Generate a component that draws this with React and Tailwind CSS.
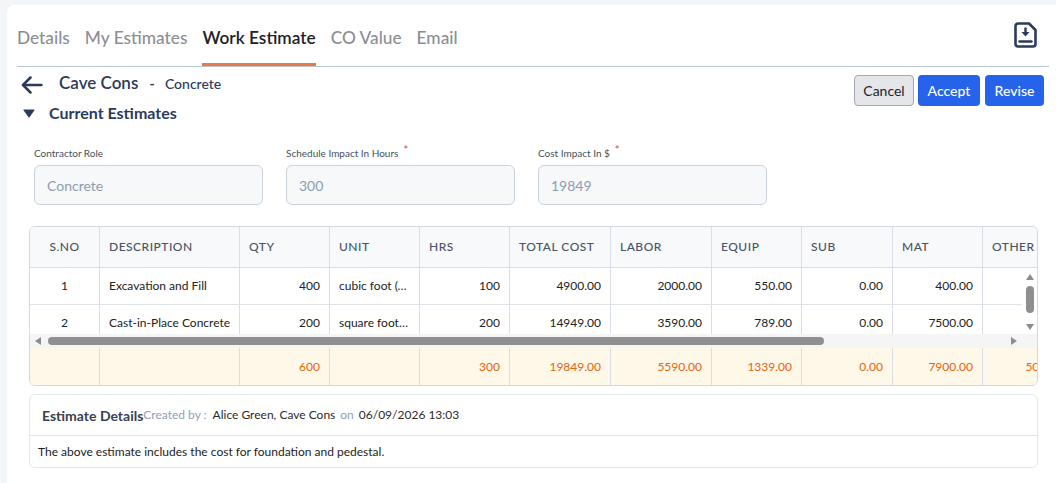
import React from "react";
import { clsx } from "clsx";

const tabs = ["Details", "My Estimates", "Work Estimate", "CO Value", "Email"];

const columns = [
  { key: "sno", label: "S.NO", w: "w-[70px]", head: "justify-center", body: "justify-center" },
  { key: "desc", label: "DESCRIPTION", w: "w-[140px]", head: "justify-start", body: "justify-start pr-[3px]" },
  { key: "qty", label: "QTY", w: "w-[90px]", head: "justify-start", body: "justify-end" },
  { key: "unit", label: "UNIT", w: "w-[90px]", head: "justify-start", body: "justify-start" },
  { key: "hrs", label: "HRS", w: "w-[90px]", head: "justify-start", body: "justify-end" },
  { key: "total", label: "TOTAL COST", w: "w-[101px]", head: "justify-start", body: "justify-end" },
  { key: "labor", label: "LABOR", w: "w-[101px]", head: "justify-start", body: "justify-end" },
  { key: "equip", label: "EQUIP", w: "w-[90px]", head: "justify-start", body: "justify-end" },
  { key: "sub", label: "SUB", w: "w-[91px]", head: "justify-start", body: "justify-end" },
  { key: "mat", label: "MAT", w: "w-[90px]", head: "justify-start", body: "justify-end" },
  { key: "other", label: "OTHER", w: "w-[97px]", head: "justify-start", body: "justify-end" },
  { key: "remarks", label: "REMARKS", w: "w-[180px]", head: "justify-start", body: "justify-start" },
];

const rows = [
  { sno: 1, desc: "Excavation and Fill", qty: 400, unit: "cubic foot (cu ft)", hrs: 100, total: "4900.00", labor: "2000.00", equip: "550.00", sub: "0.00", mat: "400.00", other: "1950.00", remarks: "" },
  { sno: 2, desc: "Cast-in-Place Concrete", qty: 200, unit: "square foot (sq ft)", hrs: 200, total: "14949.00", labor: "3590.00", equip: "789.00", sub: "0.00", mat: "7500.00", other: "3070.00", remarks: "" },
];

const totals = { sno: "", desc: "", qty: 600, unit: "", hrs: 300, total: "19849.00", labor: "5590.00", equip: "1339.00", sub: "0.00", mat: "7900.00", other: "5020.00", remarks: "" };

const DownloadIcon = () => (
  <svg width="23" height="26" viewBox="0 0 23 26" fill="none" stroke="#2c3a5c" strokeLinecap="round" strokeLinejoin="round">
    <path d="M4 1.5H15L21.5 8V22a2.5 2.5 0 0 1-2.5 2.5H4A2.5 2.5 0 0 1 1.5 22V4A2.5 2.5 0 0 1 4 1.5Z" strokeWidth="2.6" />
    <path d="M11.5 6.5V11" strokeWidth="2.4" />
    <polygon points="7.5,10 15.5,10 11.5,14.5" fill="#2c3a5c" stroke="none" />
    <path d="M5.5 19.5H17.5" strokeWidth="2.4" />
  </svg>
);

const BackArrow = () => (
  <svg width="22" height="18" viewBox="0 0 22 18" fill="none" stroke="#2c3a5c" strokeWidth="2.5" strokeLinecap="round" strokeLinejoin="round">
    <path d="M20.5 9H2" />
    <path d="M9.5 1.5 2 9l7.5 7.5" />
  </svg>
);

const Caret = () => (
  <svg width="12" height="9" viewBox="0 0 12 9">
    <path d="M1 1h10L6 8Z" fill="#2c3a5c" stroke="#2c3a5c" strokeWidth="1.2" strokeLinejoin="round" />
  </svg>
);

const Arrow = ({ dir }) => {
  const pts = {
    up: "0,6 8,6 4,0",
    down: "0,0 8,0 4,6",
    left: "6,0 6,8 0,4",
    right: "0,0 0,8 6,4",
  }[dir];
  const vertical = dir === "up" || dir === "down";
  return (
    <svg width={vertical ? 8 : 6} height={vertical ? 6 : 8} viewBox={vertical ? "0 0 8 6" : "0 0 6 8"}>
      <polygon points={pts} fill="#8c8c8c" />
    </svg>
  );
};

const TableRow = ({ data, kind }) => (
  <div
    className={clsx(
      "flex h-[37px] text-[12px]",
      kind === "body" && "border-b border-[#dfe3ea] text-[#222]",
      kind === "foot" && "bg-[#fdf8e8] text-[#e8630f]"
    )}
  >
    {columns.map((c) => (
      <div
        key={c.key}
        className={clsx("flex shrink-0 items-center border-r border-[#d9dee6] px-[9px]", c.w, c.body)}
      >
        <span className={c.key === "unit" ? "truncate" : "overflow-hidden whitespace-nowrap"}>{data[c.key]}</span>
      </div>
    ))}
  </div>
);

const Field = ({ label, value, required }) => (
  <div className="w-[229px]">
    <div className="flex h-[14px] items-center text-[10px] text-[#454f5c]">
      {label}
      {required && <span className="ml-[5px] -mt-[6px] text-[11px] text-[#e53935]">*</span>}
    </div>
    <div className="mt-[5px] flex h-[40px] items-center rounded-[6px] border border-[#c9d2dc] bg-[#f7f8fa] px-[12px] text-[14px] text-[#8e9cb0]">
      {value}
    </div>
  </div>
);

export default function App() {
  return (
    <div className="min-h-screen bg-[#f3f6f9] pl-[7px] pt-[5px] font-['Lato',sans-serif]">
      <div className="min-h-[478px] rounded-tl-[8px] bg-white pl-[10px] pr-[12px]">
        {/* tabs */}
        <div className="-mr-[5px] flex items-end justify-between border-b border-[#b8c5d2]">
          <div className="flex gap-[15px]">
            {tabs.map((t) => (
              <div
                key={t}
                className={clsx(
                  "pt-[21px] pb-[13px] text-[17.3px] leading-[24px] border-b-[3px]",
                  t === "Work Estimate"
                    ? "border-[#e8794a] font-semibold text-[#1d2129]"
                    : "border-transparent font-medium text-[#8b8e94]"
                )}
              >
                {t}
              </div>
            ))}
          </div>
          <div className="mb-[18px] mr-[12px]">
            <DownloadIcon />
          </div>
        </div>

        {/* title + actions */}
        <div className="flex justify-between">
          <div>
            <div className="flex h-[32px] items-center">
              <span className="ml-[4px] mt-[3px]">
                <BackArrow />
              </span>
              <span className="ml-[16px] text-[17px] font-semibold text-[#2c3a5c]">Cave Cons</span>
              <span className="ml-[11px] text-[15px] font-semibold text-[#2c3a5c]">-</span>
              <span className="ml-[10px] text-[14px] font-medium text-[#2c3a5c]">Concrete</span>
            </div>
            <div className="flex h-[28px] items-center">
              <span className="ml-[6px]">
                <Caret />
              </span>
              <span className="ml-[14px] text-[16px] font-bold text-[#2c3a5c]">Current Estimates</span>
            </div>
          </div>
          <div className="mt-[8px] flex gap-[4px]">
            <button className="flex h-[31px] w-[60px] items-center justify-center rounded-[4px] border border-[#a3a8b0] bg-[#e4e6ea] text-[14px] text-[#1f1f1f]">
              Cancel
            </button>
            <button className="flex h-[31px] w-[62px] items-center justify-center rounded-[4px] bg-[#2563eb] text-[14px] font-medium text-white">
              Accept
            </button>
            <button className="ml-[1px] flex h-[31px] w-[59px] items-center justify-center rounded-[4px] bg-[#2563eb] text-[14px] font-medium text-white">
              Revise
            </button>
          </div>
        </div>

        {/* fields */}
        <div className="ml-[17px] mt-[19px] flex gap-[23px]">
          <Field label="Contractor Role" value="Concrete" />
          <Field label="Schedule Impact In Hours" value="300" required />
          <Field label="Cost Impact In $" value="19849" required />
        </div>

        {/* table */}
        <div className="ml-[12px] mt-[21px] w-[1009px] overflow-hidden rounded-[6px] border border-[#d3d9e1]">
          <div className="overflow-hidden">
            <div className="flex h-[41px] border-b border-[#d9dee6] bg-[#f8f9fb] text-[12px] font-medium tracking-[0.5px] text-[#4a5363]">
              {columns.map((c) => (
                <div key={c.key} className={clsx("flex shrink-0 items-center border-r border-[#d9dee6] px-[9px]", c.w, c.head)}>
                  {c.label}
                </div>
              ))}
            </div>
          </div>
          <div className="flex h-[66px]">
            <div className="w-[992px] overflow-hidden">
              {rows.map((r) => (
                <TableRow key={r.sno} data={r} kind="body" />
              ))}
            </div>
            <div className="flex w-[15px] flex-col items-center bg-white">
              <div className="flex h-[15px] items-center pt-[2px]">
                <Arrow dir="up" />
              </div>
              <div className="mt-[3px] h-[27px] w-[8px] rounded-full bg-[#8f8f8f]" />
              <div className="flex-1" />
              <div className="flex h-[15px] items-center">
                <Arrow dir="down" />
              </div>
            </div>
          </div>
          <div className="flex h-[14px] items-center bg-[#f5f5f5]">
            <div className="flex w-[15px] justify-center">
              <Arrow dir="left" />
            </div>
            <div className="ml-[3px] h-[8px] w-[776px] rounded-full bg-[#8f8f8f]" />
            <div className="flex-1" />
            <div className="flex w-[15px] justify-center">
              <Arrow dir="right" />
            </div>
            <div className="w-[16px]" />
          </div>
          <div className="overflow-hidden">
            <TableRow data={totals} kind="foot" />
          </div>
        </div>

        {/* estimate details */}
        <div className="ml-[12px] mt-[8px] w-[1009px] rounded-[6px] border border-[#e3e7ed]">
          <div className="flex h-[41px] items-center border-b border-[#e3e7ed] px-[12px]">
            <span className="text-[14px] font-bold text-[#394150]">Estimate Details</span>
            <span className="text-[12px] text-[#8fa1b8]">Created by :</span>
            <span className="ml-[6px] text-[12px] text-[#2b2b2b]">Alice Green, Cave Cons</span>
            <span className="ml-[5px] text-[12px] text-[#8fa1b8]">on</span>
            <span className="ml-[5px] text-[12px] text-[#2b2b2b]">06/09/2026 13:03</span>
          </div>
          <div className="flex h-[31px] items-center px-[8px] text-[12px] text-[#222]">
            The above estimate includes the cost for foundation and pedestal.
          </div>
        </div>
      </div>
    </div>
  );
}
